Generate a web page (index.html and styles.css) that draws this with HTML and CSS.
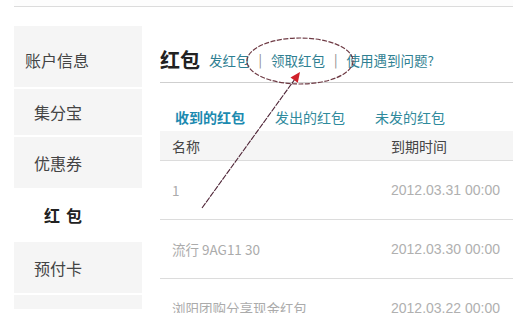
FILE: index.html
```html
<!DOCTYPE html>
<html lang="zh-CN">
<head>
<meta charset="utf-8">
<title>红包</title>
<link rel="stylesheet" href="styles.css">
</head>
<body>
<div class="page">
  <div class="topbar"></div>
  <div class="layout">
    <nav class="sidebar">
      <div class="nav-item first">账户信息</div>
      <div class="nav-item second">集分宝</div>
      <div class="nav-item">优惠券</div>
      <div class="nav-item active">红包</div>
      <div class="nav-item">预付卡</div>
      <div class="nav-item tail"></div>
    </nav>
    <main class="main">
      <div class="header">
        <span class="title">红包</span>
        <a class="link">发红包</a>
        <span class="sep">|</span>
        <a class="link">领取红包</a>
        <span class="sep">|</span>
        <a class="link">使用遇到问题?</a>
      </div>
      <div class="tabs">
        <span class="tab current">收到的红包</span>
        <span class="tab">发出的红包</span>
        <span class="tab">未发的红包</span>
      </div>
      <div class="table">
        <div class="row head"><span class="cell">名称</span><span class="cell">到期时间</span></div>
        <div class="row"><span class="cell name">1</span><span class="cell date">2012.03.31 00:00</span></div>
        <div class="row"><span class="cell name">流行 9AG11 30</span><span class="cell date">2012.03.30 00:00</span></div>
        <div class="row"><span class="cell name">浏阳团购分享现金红包</span><span class="cell date">2012.03.22 00:00</span></div>
      </div>
    </main>
  </div>
  <svg class="annotation" width="513" height="313" viewBox="0 0 513 313">
    <ellipse cx="300" cy="61" rx="53" ry="23" fill="none" stroke="#6e3a44" stroke-width="1.2" stroke-dasharray="5 1.5"/>
    <line x1="202" y1="208" x2="295" y2="79" stroke="#4e2436" stroke-width="1.1" stroke-dasharray="6 1"/>
    <polygon points="300,72 297.8,82.7 290.5,77.5" fill="#d0202a"/>
  </svg>
</div>
</body>
</html>
```

FILE: styles.css
```css
html, body {
  margin: 0;
  padding: 0;
  background: #ffffff;
}
body {
  width: 513px;
  height: 313px;
  overflow: hidden;
  font-family: "Noto Sans CJK SC", "Noto Sans", sans-serif;
}
.page {
  position: relative;
  width: 513px;
  height: 313px;
  overflow: hidden;
}
.topbar {
  margin-left: 14px;
  height: 6px;
  border-bottom: 1px solid #dcdcdc;
  background: #fdfdfd;
}
.layout {
  display: flex;
  margin-top: 19px;
  padding-left: 14px;
}
.sidebar {
  width: 128px;
  display: flex;
  flex-direction: column;
  gap: 2px;
  flex-shrink: 0;
}
.nav-item {
  background: #f5f5f5;
  height: 51px;
  display: flex;
  align-items: center;
  padding-left: 20px;
  font-size: 16px;
  color: #444;
  line-height: 20px;
}
.nav-item.first {
  height: 61px;
  align-items: flex-start;
  padding-top: 24px;
  box-sizing: border-box;
  padding-left: 11px;
}
.nav-item.second {
  height: 46px;
}
.nav-item.active {
  background: #ffffff;
  height: 50px;
  padding-left: 30px;
  font-weight: bold;
  color: #222;
  letter-spacing: 6px;
}
.nav-item.tail {
  height: 14px;
}
.main {
  flex: 1;
  margin-left: 18px;
  min-width: 0;
}
.header {
  box-sizing: border-box;
  padding-top: 22px;
  padding-bottom: 11px;
  height: 57px;
  border-bottom: 1px solid #cfcfcf;
  display: flex;
  align-items: center;
}
.title {
  font-size: 20px;
  font-weight: bold;
  color: #222;
  margin-right: 9px;
  line-height: 24px;
}
.link {
  font-size: 13.5px;
  color: #2f7f92;
  line-height: 24px;
}
.sep {
  font-size: 13px;
  color: #888;
  margin: 0 9px;
  line-height: 24px;
}
.tabs {
  height: 48px;
  box-sizing: border-box;
  padding-top: 24px;
  padding-left: 15px;
  display: flex;
  gap: 30px;
}
.tab {
  font-size: 14px;
  line-height: 20px;
  color: #2f8a9c;
}
.tab.current {
  font-weight: bold;
  color: #1c8ab0;
}
.row {
  display: grid;
  grid-template-columns: 231px 1fr;
  height: 59px;
  align-items: center;
  border-bottom: 1px solid #dcdcdc;
  box-sizing: border-box;
}
.cell {
  font-size: 13.5px;
  color: #444;
}
.row > .cell:first-child {
  padding-left: 12px;
}
.row.head {
  height: 30px;
  background: #f5f5f5;
}
.row.head .cell {
  font-size: 14px;
  color: #444;
}
.cell.name {
  color: #ababab;
}
.cell.date {
  font-family: "Liberation Sans", sans-serif;
  font-size: 14px;
  color: #b0b0b0;
}
.annotation {
  position: absolute;
  left: 0;
  top: 0;
}
```
